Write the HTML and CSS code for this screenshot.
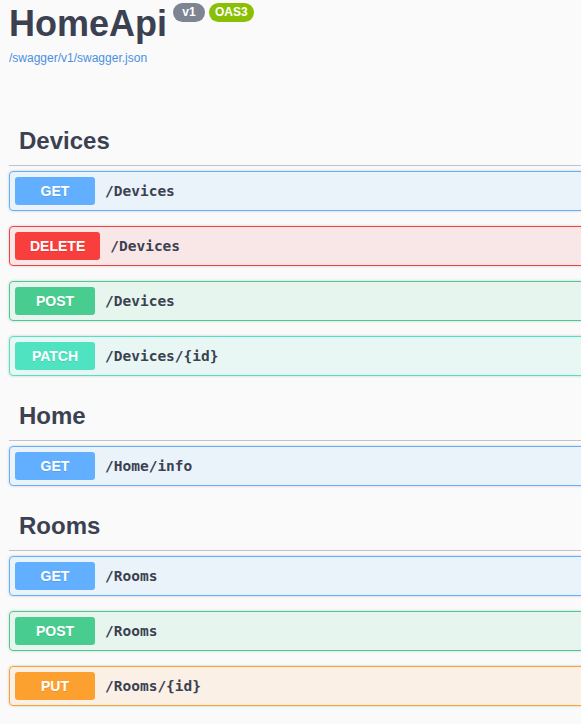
FILE: index.html
```html
<!DOCTYPE html>
<html lang="en">
<head>
<meta charset="utf-8">
<title>HomeApi</title>
<link rel="stylesheet" href="styles.css">
</head>
<body>
<div class="wrapper">
  <div class="info">
    <h2 class="title">HomeApi<span class="badges"><span class="badge badge-ver">v1</span><span class="badge badge-oas">OAS3</span></span></h2>
    <a class="spec-link" href="#">/swagger/v1/swagger.json</a>
  </div>

  <section class="tag-section">
    <h3 class="tag">Devices</h3>
    <div class="opblock get"><span class="method">GET</span><span class="path">/Devices</span></div>
    <div class="opblock delete"><span class="method">DELETE</span><span class="path">/Devices</span></div>
    <div class="opblock post"><span class="method">POST</span><span class="path">/Devices</span></div>
    <div class="opblock patch"><span class="method">PATCH</span><span class="path">/Devices/{id}</span></div>
  </section>

  <section class="tag-section">
    <h3 class="tag">Home</h3>
    <div class="opblock get"><span class="method">GET</span><span class="path">/Home/info</span></div>
  </section>

  <section class="tag-section">
    <h3 class="tag">Rooms</h3>
    <div class="opblock get"><span class="method">GET</span><span class="path">/Rooms</span></div>
    <div class="opblock post"><span class="method">POST</span><span class="path">/Rooms</span></div>
    <div class="opblock put"><span class="method">PUT</span><span class="path">/Rooms/{id}</span></div>
  </section>
</div>
</body>
</html>
```
FILE: styles.css
```css
html, body {
  margin: 0;
  padding: 0;
  background: #fafafa;
  overflow: hidden;
}
body {
  font-family: "Liberation Sans", Arial, sans-serif;
  color: #3b4151;
}
.wrapper {
  width: 900px;
  padding: 0 0 0 9px;
}
.info {
  padding-top: 3px;
  height: 113px;
}
.title {
  margin: 0;
  font-size: 36px;
  line-height: 41px;
  font-weight: 700;
  color: #3b4151;
  display: flex;
  align-items: flex-start;
}
.badges {
  display: flex;
  gap: 4px;
  margin-left: 6px;
}
.badge {
  display: inline-block;
  font-size: 12px;
  font-weight: 700;
  line-height: 15px;
  padding: 2px 7px;
  border-radius: 57px;
  color: #fff;
  text-align: center;
}
.badge-ver {
  background: #7d8492;
  min-width: 18px;
}
.badge-oas {
  background: #89bf04;
  padding: 2px 6px;
}
.spec-link {
  display: block;
  margin-top: 7px;
  font-size: 12px;
  color: #4990e2;
  text-decoration: none;
}
.tag-section {
  display: flex;
  flex-direction: column;
}
.tag {
  margin: 0 0 5px;
  padding: 10px 20px 10px 10px;
  font-size: 24px;
  line-height: 29px;
  font-weight: 700;
  color: #3b4151;
  border-bottom: 1px solid rgba(59, 65, 81, 0.3);
}
.opblock {
  display: flex;
  align-items: center;
  padding: 5px;
  margin: 0 0 15px;
  border: 1px solid;
  border-radius: 4px;
  box-shadow: 0 0 3px rgba(0, 0, 0, 0.19);
}
.method {
  min-width: 80px;
  height: 28px;
  box-sizing: border-box;
  padding: 6px 15px;
  font-size: 14px;
  line-height: 16px;
  font-weight: 700;
  text-align: center;
  color: #fff;
  border-radius: 3px;
  text-shadow: 0 1px 0 rgba(0, 0, 0, 0.1);
}
.path {
  padding: 0 10px;
  font-family: "DejaVu Sans Mono", "Liberation Mono", monospace;
  font-size: 14.5px;
  font-weight: 700;
  color: #3b4151;
}
.get { background: rgba(97, 175, 254, 0.1); border-color: #61affe; }
.get .method { background: #61affe; }
.delete { background: rgba(249, 62, 62, 0.1); border-color: #f93e3e; }
.delete .method { background: #f93e3e; }
.post { background: rgba(73, 204, 144, 0.1); border-color: #49cc90; }
.post .method { background: #49cc90; }
.patch { background: rgba(80, 227, 194, 0.1); border-color: #50e3c2; }
.patch .method { background: #50e3c2; }
.put { background: rgba(252, 161, 48, 0.1); border-color: #fca130; }
.put .method { background: #fca130; }
```
